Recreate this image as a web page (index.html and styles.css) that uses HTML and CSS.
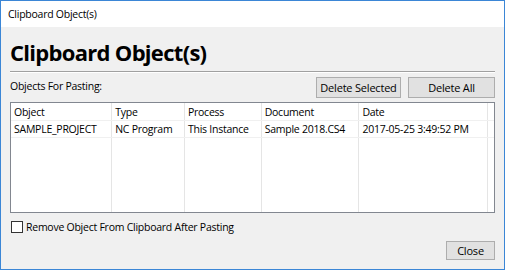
FILE: index.html
```html
<!DOCTYPE html>
<html>

<head>
    <title>Clipboard Object(s)</title>
    <link rel="stylesheet" href="styles.css">
</head>

<body>
    <div class="window">
        <div class="titlebar">Clipboard Object(s)</div>
        <div class="content">
            <h1>Clipboard Object(s)</h1>
            <div class="toolbar">
                <span class="label">Objects For Pasting:</span>
                <button class="btn btn-sel">Delete Selected</button>
                <button class="btn btn-all">Delete All</button>
            </div>
            <div class="grid">
                <table>
                    <tr>
                        <th class="c1">Object</th>
                        <th class="c2">Type</th>
                        <th class="c3">Process</th>
                        <th class="c4">Document</th>
                        <th class="c5">Date</th>
                        <th></th>
                    </tr>
                    <tr>
                        <td>SAMPLE_PROJECT</td>
                        <td>NC Program</td>
                        <td>This Instance</td>
                        <td>Sample 2018.CS4</td>
                        <td>2017-05-25 3:49:52 PM</td>
                        <td></td>
                    </tr>
                    <tr class="filler">
                        <td></td>
                        <td></td>
                        <td></td>
                        <td></td>
                        <td></td>
                        <td></td>
                    </tr>
                </table>
            </div>
            <label class="check"><span class="box"></span>Remove Object From Clipboard After Pasting</label>
            <div class="footer">
                <button class="btn btn-close">Close</button>
            </div>
        </div>
    </div>
</body>

</html>
```

FILE: styles.css
```css
* {
    margin: 0;
    padding: 0;
    box-sizing: border-box;
}

body {
    font-family: "Open Sans", sans-serif;
    font-size: 10.5px;
    letter-spacing: -0.25px;
    color: #000;
    background: #fff;
}

.window {
    width: 505px;
    height: 270px;
    border: 1px solid #3b86d6;
    background: #f0f0f0;
    display: flex;
    flex-direction: column;
}

.titlebar {
    height: 26px;
    background: #fff;
    padding: 6px 0 0 7px;
}

.content {
    padding: 0 9px 0 9px;
    display: flex;
    flex-direction: column;
    flex: 1;
}

h1 {
    font-size: 22px;
    letter-spacing: -0.7px;
    font-weight: bold;
    height: 45px;
    padding-top: 11px;
    line-height: 29px;
    border-bottom: 1px solid #a0a0a0;
    box-shadow: 0 1px 0 #fff;
}

.toolbar {
    display: flex;
    align-items: flex-start;
    margin-top: 5px;
    height: 25px;
}

.label {
    flex: 1;
    padding-top: 2px;
}

.btn {
    font-family: "Open Sans", sans-serif;
    font-size: 11px;
    letter-spacing: -0.2px;
    background: #e1e1e1;
    border: 1px solid #adadad;
    height: 21px;
    color: #000;
}

.btn-sel {
    width: 85px;
}

.btn-all {
    width: 87px;
    margin-left: 7px;
}

.grid {
    height: 111px;
    background: #fff;
    border: 1px solid #828790;
}

table {
    border-collapse: collapse;
    width: 100%;
    height: 100%;
}

th,
td {
    text-align: left;
    font-weight: normal;
    padding: 1px 3px 0;
    border-right: 1px solid #e5e5e5;
    border-bottom: 1px solid #f0f0f0;
    height: 17px;
    white-space: nowrap;
}

th:last-child,
td:last-child {
    border-right: none;
}

.filler td {
    height: auto;
    border-bottom: none;
}

.c1 {
    width: 101px;
}

.c2 {
    width: 73px;
}

.c3 {
    width: 77px;
}

.c4 {
    width: 98px;
}

.c5 {
    width: 129px;
}

.check {
    display: flex;
    align-items: center;
    margin-top: 7px;
    height: 13px;
    padding-left: 1px;
}

.box {
    width: 12px;
    height: 12px;
    border: 1px solid #333;
    background: #fff;
    margin-right: 3px;
}

.footer {
    display: flex;
    justify-content: flex-end;
    margin-top: 8px;
}

.btn-close {
    width: 49px;
    height: 19px;
}
```
